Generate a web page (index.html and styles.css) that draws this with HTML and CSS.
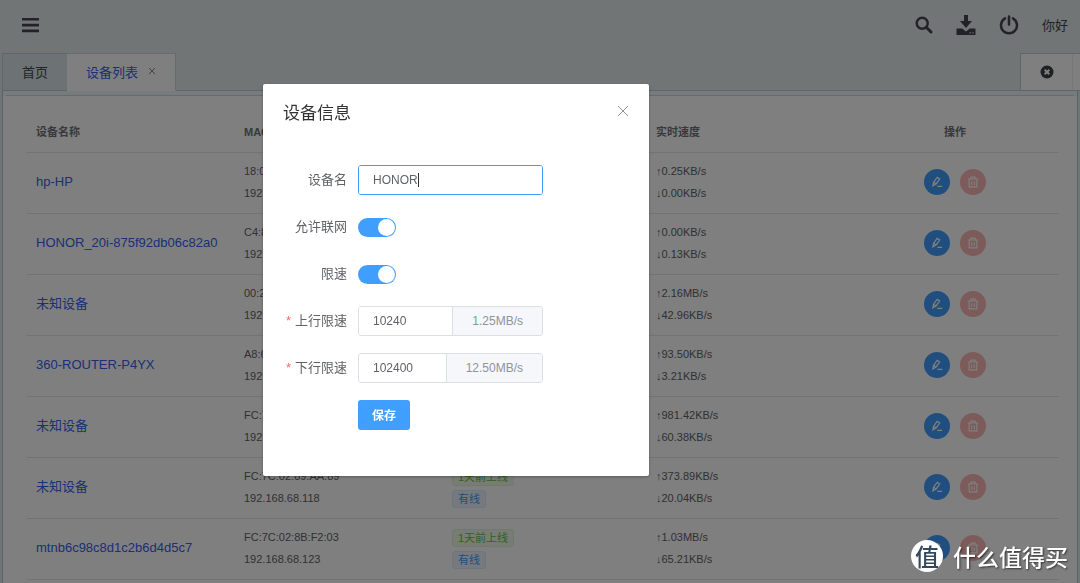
FILE: index.html
```html
<!DOCTYPE html>
<html lang="zh-CN">
<head>
<meta charset="utf-8">
<title>设备列表</title>
<link rel="stylesheet" href="styles.css">
</head>
<body>
<svg class="symbols" aria-hidden="true">
  <symbol id="edit" viewBox="0 0 14 14"><path d="M2.2 11.4 3 7.4 7.2 1.4 10.2 3.4 6 9.3ZM3.2 7.4 6 9.2M7.4 12.2H13" fill="none" stroke="currentColor" stroke-width="1.4"/></symbol>
  <symbol id="trash" viewBox="0 0 14 14"><path d="M1 3.5H13M4.5 3.2V1.3H9.5V3.2M2.5 3.7V12.7H11.5V3.7M5.5 6V10.4M8.5 6V10.4" fill="none" stroke="currentColor" stroke-width="1.3"/></symbol>
</svg>
<div class="page">
  <header class="topbar">
    <button class="icon-btn" aria-label="菜单"><svg width="18" height="16" viewBox="0 0 18 16"><path d="M1 1h17v2.6H1zM1 6.8h17v2.6H1zM1 12.6h17v2.6H1z" fill="currentColor"/></svg></button>
    <div class="actions">
      <button class="icon-btn" aria-label="搜索"><svg width="18" height="18" viewBox="0 0 18 18"><path d="M11.3 11.3 16 16" stroke="currentColor" stroke-width="3" stroke-linecap="round"/><circle cx="7.2" cy="7.2" r="5.5" fill="none" stroke="currentColor" stroke-width="2.4"/></svg></button>
      <button class="icon-btn" aria-label="下载"><svg width="20" height="20" viewBox="0 0 20 20"><path d="M8 0h4v6h4l-6 7-6-7h4zM.5 13.5h5.7L10 16.6l3.8-3.1h5.7V20H.5z" fill="currentColor"/><path d="M13.5 17.2h1.3v1.3h-1.3zM16.3 17.2h1.3v1.3h-1.3z" fill="#e2eaed"/></svg></button>
      <button class="icon-btn" aria-label="退出"><svg width="20" height="20" viewBox="0 0 20 20"><path d="M6 3.4a8 8 0 1 0 8 0M10 1.5v8" fill="none" stroke="currentColor" stroke-width="2.5" stroke-linecap="round"/></svg></button>
      <span class="greeting">你好</span>
    </div>
  </header>
  <nav class="tabs">
    <a class="tab" href="#">首页</a>
    <a class="tab active" href="#">设备列表<svg width="8" height="8" viewBox="0 0 8 8"><path d="M1 1 7 7M7 1 1 7" stroke="currentColor"/></svg></a>
    <div class="tab-tools">
      <button aria-label="关闭标签"><svg width="14" height="14" viewBox="0 0 14 14"><circle cx="7" cy="7" r="6.5" fill="currentColor"/><path d="M4.7 4.7 9.3 9.3M9.3 4.7 4.7 9.3" stroke="#fff" stroke-width="2"/></svg></button>
    </div>
  </nav>
  <main class="panel">
    <table>
      <thead><tr><th class="c-name">设备名称</th><th class="c-mac">MAC</th><th class="c-state"></th><th class="c-speed">实时速度</th><th class="c-op">操作</th></tr></thead>
      <tbody>
        <tr><td><a href="#">hp-HP</a></td><td>18:0<br>192.</td><td></td><td>↑0.25KB/s<br>↓0.00KB/s</td><td class="ops"><button class="edit" aria-label="编辑"><svg><use href="#edit"/></svg></button><button class="del" aria-label="删除"><svg><use href="#trash"/></svg></button></td></tr>
        <tr><td><a href="#">HONOR_20i-875f92db06c82a0</a></td><td>C4:8<br>192.</td><td></td><td>↑0.00KB/s<br>↓0.13KB/s</td><td class="ops"><button class="edit" aria-label="编辑"><svg><use href="#edit"/></svg></button><button class="del" aria-label="删除"><svg><use href="#trash"/></svg></button></td></tr>
        <tr><td><a href="#">未知设备</a></td><td>00:2<br>192.</td><td></td><td>↑2.16MB/s<br>↓42.96KB/s</td><td class="ops"><button class="edit" aria-label="编辑"><svg><use href="#edit"/></svg></button><button class="del" aria-label="删除"><svg><use href="#trash"/></svg></button></td></tr>
        <tr><td><a href="#">360-ROUTER-P4YX</a></td><td>A8:6<br>192.</td><td></td><td>↑93.50KB/s<br>↓3.21KB/s</td><td class="ops"><button class="edit" aria-label="编辑"><svg><use href="#edit"/></svg></button><button class="del" aria-label="删除"><svg><use href="#trash"/></svg></button></td></tr>
        <tr><td><a href="#">未知设备</a></td><td>FC:7<br>192.</td><td></td><td>↑981.42KB/s<br>↓60.38KB/s</td><td class="ops"><button class="edit" aria-label="编辑"><svg><use href="#edit"/></svg></button><button class="del" aria-label="删除"><svg><use href="#trash"/></svg></button></td></tr>
        <tr><td><a href="#">未知设备</a></td><td>FC:7C:02:89:AA:89<br>192.168.68.118</td><td><span class="tag online">1天前上线</span><br><span class="tag wired">有线</span></td><td>↑373.89KB/s<br>↓20.04KB/s</td><td class="ops"><button class="edit" aria-label="编辑"><svg><use href="#edit"/></svg></button><button class="del" aria-label="删除"><svg><use href="#trash"/></svg></button></td></tr>
        <tr><td><a href="#">mtnb6c98c8d1c2b6d4d5c7</a></td><td>FC:7C:02:8B:F2:03<br>192.168.68.123</td><td><span class="tag online">1天前上线</span><br><span class="tag wired">有线</span></td><td>↑1.03MB/s<br>↓65.21KB/s</td><td class="ops"><button class="edit" aria-label="编辑"><svg><use href="#edit"/></svg></button><button class="del" aria-label="删除"><svg><use href="#trash"/></svg></button></td></tr>
      </tbody>
    </table>
  </main>
</div>

<div class="overlay">
  <section class="dialog" role="dialog" aria-labelledby="dialog-title">
    <header class="dialog-head">
      <h2 id="dialog-title">设备信息</h2>
      <button class="close" aria-label="关闭"><svg width="12" height="12" viewBox="0 0 12 12"><path d="M1 1 11 11M11 1 1 11" stroke="currentColor"/></svg></button>
    </header>
    <form class="form">
      <label for="name">设备名</label>
      <div class="field focus"><input id="name" type="text" value="HONOR"><span class="caret"></span></div>
      <label for="net">允许联网</label>
      <input class="switch" id="net" type="checkbox" checked>
      <label for="limit">限速</label>
      <input class="switch" id="limit" type="checkbox" checked>
      <label class="required" for="up">上行限速</label>
      <div class="field"><input id="up" type="text" value="10240"><span class="unit">1.25MB/s</span></div>
      <label class="required" for="down">下行限速</label>
      <div class="field"><input id="down" type="text" value="102400"><span class="unit">12.50MB/s</span></div>
      <button class="save" type="button">保存</button>
    </form>
  </section>
</div>
<div class="watermark"><span class="mark">值</span><span>什么值得买</span></div>
</body>
</html>
```

FILE: styles.css
```css
* { box-sizing: border-box; }
body {
  margin: 0;
  background: #e2eaed;
  font-family: "Liberation Sans", "Noto Sans CJK SC", sans-serif;
  font-size: 13px;
  color: #606266;
}
button { padding: 0; border: 0; background: none; font: inherit; color: inherit; display: inline-flex; align-items: center; justify-content: center; }
a { text-decoration: none; color: #3560ee; }
.symbols { display: none; }

.page { display: flex; flex-direction: column; height: 100vh; overflow: hidden; }
.topbar { flex: none; display: flex; justify-content: space-between; align-items: center; height: 53px; padding: 0 12px 4px 21px; color: #42474c; }
.actions { display: flex; align-items: center; gap: 23px; }
.greeting { font-size: 13px; }

.tabs { flex: none; display: flex; height: 38px; margin-left: 2px; border-bottom: 1px solid #bccdd4; }
.tab { display: flex; align-items: center; gap: 10px; height: 38px; padding: 0 19px 2px; border: 1px solid #bccdd4; border-right: 0; background: #dae4e8; color: #44484c; }
.tab.active { background: #fff; border: 1px solid #ccd8dd; border-left: 0; border-bottom-color: #fff; color: #3560ee; }
.tab svg { color: #7d8aa8; }
.tab-tools { display: flex; margin-left: auto; width: 60px; background: #fff; border: 1px solid #bccdd4; border-width: 1px 0 0 1px; color: #3d4144; }
.tab-tools button { width: 52px; border-right: 1px solid #eee; }

.panel { flex: 1; min-height: 0; margin: 0 2px; padding: 4px 3px 0; border-left: 1px solid #b4c6ce; border-right: 1px solid #b4c6ce; background: linear-gradient(#f1f6f8 5px, #fff 5px); }
.panel::before { content: ""; display: block; height: 17px; border-top: 1px solid #ccd8dd; background: #fff; }
.panel table { width: calc(100% - 36px); margin: 0 15px 0 21px; }
table { table-layout: fixed; border-collapse: separate; border-spacing: 0; font-size: 11px; line-height: 22px; }
th, td { padding: 7px 9px 9px; text-align: left; border-bottom: 1px solid #e4e7ec; vertical-align: middle; white-space: nowrap; }
th { height: 40px; color: #707379; font-weight: bold; }
td { height: 61px; }
td a { font-size: 13px; }
.c-name, .c-mac { width: 208px; }
.c-state, .c-speed { width: 204px; }
th.c-op, .ops { text-align: center; }
.ops button { width: 26px; height: 26px; border-radius: 50%; color: #fff; vertical-align: middle; }
.ops button + button { margin-left: 10px; }
.ops svg { width: 12px; height: 12px; }
.edit { background: #409eff; }
.del { background: #fab6b6; }
.tag { display: inline-block; height: 18px; padding: 0 5px; border: 1px solid; border-radius: 3px; line-height: 16px; vertical-align: middle; }
.online { color: #67c23a; background: #f0f9eb; border-color: #e1f3d8; }
.wired { color: #409eff; background: #ecf5ff; border-color: #d9ecff; }

.overlay { position: fixed; inset: 0; padding: 84px 0 0 263px; background: rgba(0, 0, 0, 0.5); }
.dialog { width: 386px; padding-bottom: 46px; border-radius: 2px; background: #fff; box-shadow: 0 1px 3px rgba(0, 0, 0, 0.3); }
.dialog-head { display: flex; justify-content: space-between; align-items: flex-start; padding: 17px 20px 0; }
.dialog-head h2 { margin: 0; font-size: 17px; line-height: 26px; font-weight: normal; color: #303133; }
.close { height: 20px; color: #909399; }
.form { display: grid; grid-template-columns: 64px 185px; justify-content: start; column-gap: 11px; row-gap: 17px; grid-auto-rows: 30px; align-items: center; padding: 38px 20px 0; }
.form label { padding-bottom: 4px; text-align: right; white-space: nowrap; }
.required::before { content: "*"; margin-right: 4px; color: #f56c6c; }
.field { position: relative; display: flex; height: 30px; border: 1px solid #dcdfe6; border-radius: 3px; overflow: hidden; }
.field input { flex: 1; min-width: 0; padding: 0 14px; border: 0; outline: 0; background: #fff; font: inherit; font-size: 12px; color: #606266; }
.field.focus { border-color: #409eff; }
.caret { position: absolute; left: 59px; top: 7px; width: 1px; height: 14px; background: #303133; }
.unit { padding: 0 19px; border-left: 1px solid #dcdfe6; background: #f5f7fa; font-size: 12px; line-height: 28px; color: #909399; }
.switch { appearance: none; display: flex; align-items: center; justify-content: flex-end; width: 38px; height: 19px; margin: 0; padding: 0 1px; border-radius: 10px; background: #409eff; }
.switch::before { content: ""; width: 17px; height: 17px; border-radius: 50%; background: #fff; }
.save { grid-column: 2; width: 52px; height: 30px; padding-bottom: 2px; border-radius: 3px; background: #409eff; color: #fff; font-size: 12px; font-weight: bold; }

.watermark { position: fixed; right: 12px; bottom: 11px; display: flex; align-items: center; gap: 10px; font-family: "Noto Sans CJK SC", sans-serif; font-size: 23px; line-height: 32px; font-weight: 500; color: #fff; text-shadow: 1px 1px 2px rgba(0, 0, 0, 0.6); }
.mark { width: 32px; height: 32px; border-radius: 50%; background: #fff; color: #34495c; font-size: 24px; line-height: 31px; text-align: center; text-shadow: none; }
```
